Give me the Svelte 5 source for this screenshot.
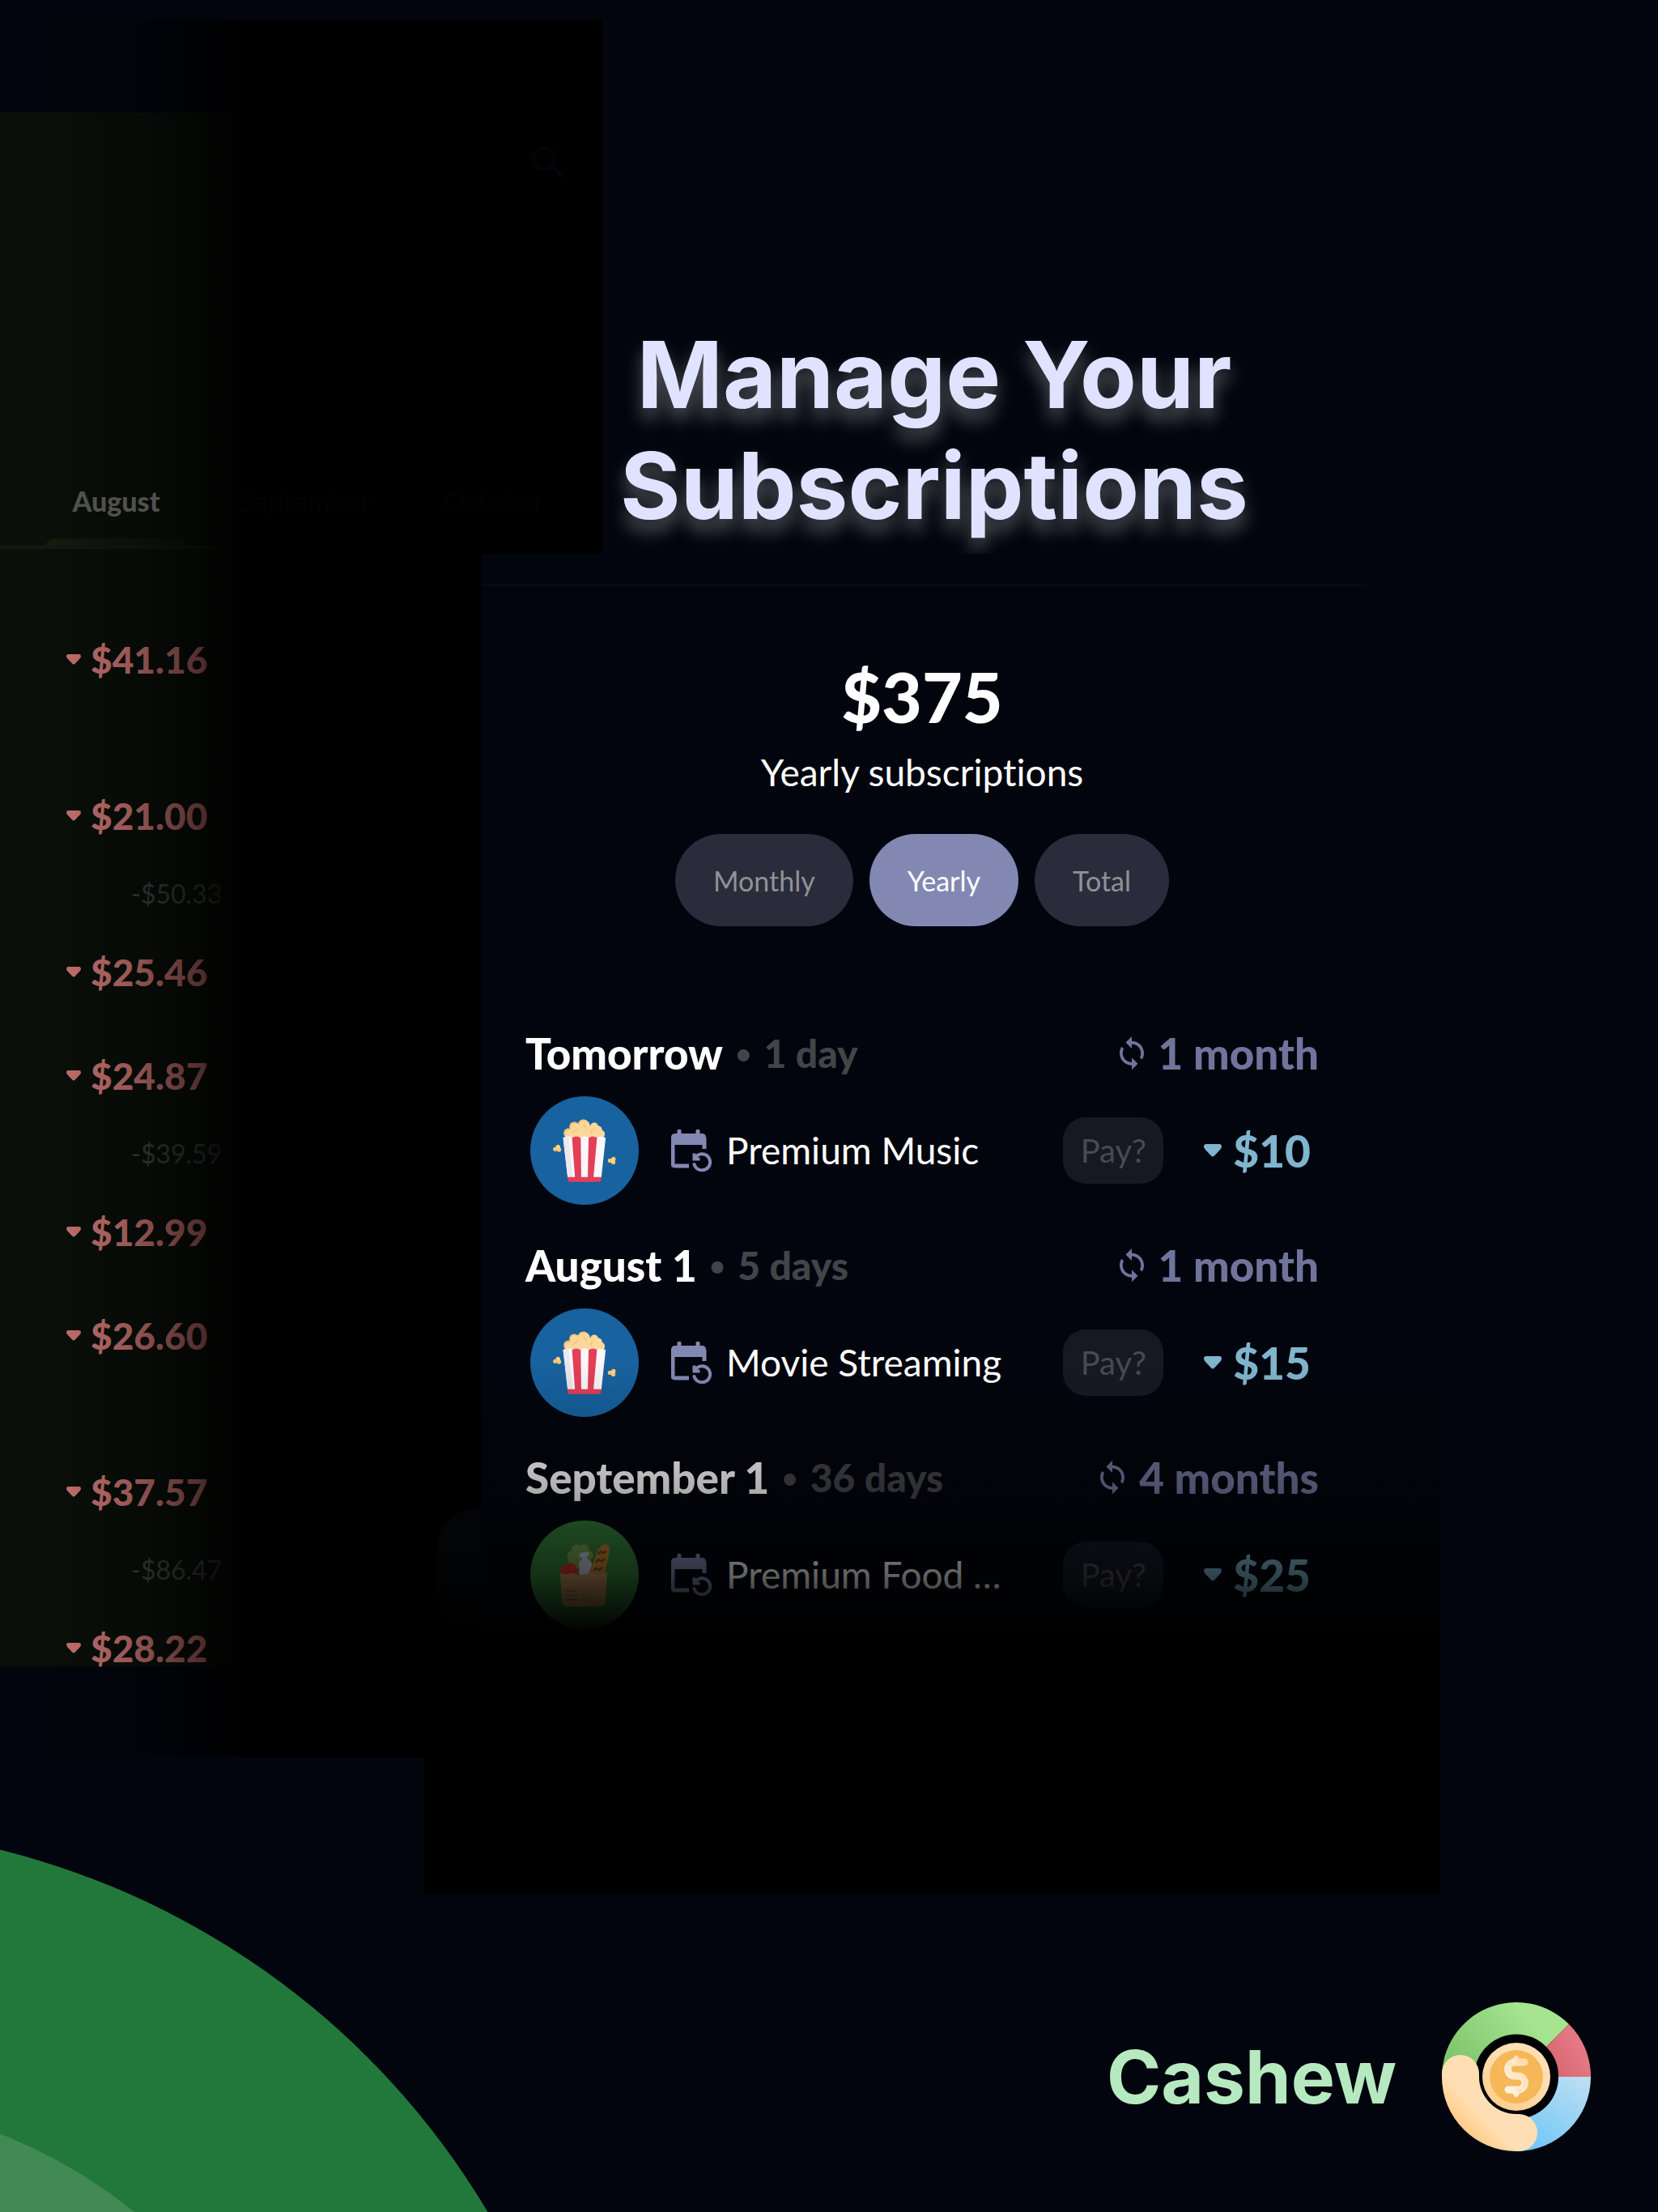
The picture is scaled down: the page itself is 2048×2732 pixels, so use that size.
<script>
  const months = [
    { name: 'August', active: true },
    { name: 'September', active: false },
    { name: 'October', active: false }
  ];

  const history = [
    { amount: '$41.16' },
    { total: '' },
    { amount: '$21.00' },
    { total: '-$50.33' },
    { amount: '$25.46' },
    { amount: '$24.87' },
    { total: '-$39.59' },
    { amount: '$12.99' },
    { amount: '$26.60' },
    { total: '' },
    { amount: '$37.57' },
    { total: '-$86.47' },
    { amount: '$28.22' }
  ];

  const periods = ['Monthly', 'Yearly', 'Total'];
  let period = $state('Yearly');

  const subscriptions = [
    { date: 'Tomorrow', left: '1 day', every: '1 month', name: 'Premium Music', price: '$10', icon: 'popcorn' },
    { date: 'August 1', left: '5 days', every: '1 month', name: 'Movie Streaming', price: '$15', icon: 'popcorn' },
    { date: 'September 1', left: '36 days', every: '4 months', name: 'Premium Food …', price: '$25', icon: 'groceries' }
  ];
</script>

{#snippet caret()}
  <svg class="caret" viewBox="0 0 22 16" aria-hidden="true">
    <path d="M3 0H19Q22 0 22 3Q22 5 20 7L13 14.500Q11 16.500 9 14.500L2 7Q0 5 0 3Q0 0 3 0Z" />
  </svg>
{/snippet}

{#snippet popcorn()}
  <svg class="badge" viewBox="0 0 400 400" aria-hidden="true">
    <circle cx="200" cy="200" r="200" fill="#17629f" />
    <g fill="#fcc675">
      <circle cx="141" cy="136" r="18" /><circle cx="162" cy="112" r="18" /><circle cx="196" cy="107" r="22" />
      <circle cx="102" cy="186" r="8" /><circle cx="106" cy="197" r="8" /><circle cx="92" cy="195" r="8" />
      <circle cx="294" cy="237" r="8" /><circle cx="307" cy="231" r="8" /><circle cx="306" cy="243" r="8" />
    </g>
    <g fill="#fdd79c">
      <circle cx="145" cy="142" r="17" /><circle cx="167" cy="119" r="18" /><circle cx="201" cy="110" r="20" />
      <circle cx="236" cy="112" r="15" /><circle cx="249" cy="124" r="16" /><circle cx="258" cy="140" r="17" />
      <circle cx="222" cy="137" r="25" /><circle cx="183" cy="142" r="24" />
      <circle cx="104" cy="188" r="6" /><circle cx="304" cy="236" r="6" />
    </g>
    <g fill="none" stroke="#fcc675" stroke-width="5" stroke-linecap="round">
      <path d="M196 108q10 2 9 12M158 134q6-10 18-11M224 136q-4-10 10-12" />
    </g>
    <path d="M121 153Q136 144 155 151Q171 144 186 152Q200 144 215 152Q230 144 246 152Q262 144 278 153L262 300H138Z" fill="#f9f7f9" />
    <path d="M121 153Q130 147 142 150L156 300H138Z" fill="#ebe8ee" />
    <path d="M154 153Q170 143 186 153L188 300H165ZM215 153Q230 143 246 153L233 300H212Z" fill="#e43f58" />
    <path d="M138 298H262L260 312Q259 316 256 316H145Q141 316 140 312Z" fill="#e43f58" />
  </svg>
{/snippet}

{#snippet groceries()}
  <svg class="badge" viewBox="0 0 400 400" aria-hidden="true">
    <circle cx="200" cy="200" r="200" fill="#34803a" />
    <g fill="#72a04a">
      <circle cx="158" cy="132" r="22" /><circle cx="172" cy="108" r="20" /><circle cx="198" cy="105" r="18" />
      <circle cx="212" cy="128" r="20" /><circle cx="185" cy="140" r="32" /><circle cx="160" cy="160" r="22" />
    </g>
    <path d="M183 120L212 115Q220 118 215 128L207 134Q210 142 221 148Q228 155 227 170L222 200H180V165Q178 152 190 143L192 135Q182 138 180 130Z" fill="#bcc6da" />
    <path d="M214 198L248 112Q262 84 282 88Q295 94 291 120L274 200Z" fill="#bd812f" />
    <path d="M250 124q8-14 14-7t16-5M242 154q8-14 14-7t18-6M234 186q8-14 14-7t18-6" fill="none" stroke="#744a25" stroke-width="8" />
    <path d="M112 188Q112 162 132 162Q145 150 158 160Q177 170 178 198H112Z" fill="#d3302b" />
    <path d="M110 192Q124 202 140 196Q156 190 172 199Q190 203 206 197Q226 190 244 198Q264 202 284 190L277 300Q276 318 256 318H138Q118 318 117 300Z" fill="#b98b5b" />
    <path d="M128 259H165M128 276H172M128 291H180M192 291H206" stroke="#8f6844" stroke-width="6" />
  </svg>
{/snippet}

<div class="poster">
  <svg class="hill" viewBox="0 2284 604 448" aria-hidden="true">
    <circle cx="-234" cy="3229" r="973" fill="#22783b" />
    <circle cx="-234" cy="3229" r="638" fill="#428a55" />
  </svg>

  <div class="stage">
    <aside class="history">
      <div class="history-card">
        <div class="toolbar">
          <button class="search" aria-label="Search">
            <svg viewBox="0 0 40 40" fill="none" stroke="currentColor" stroke-width="4" aria-hidden="true">
              <circle cx="15" cy="15" r="13" /><path d="M24 24L38 38" stroke-width="5" />
            </svg>
          </button>
        </div>
        <nav class="months">
          {#each months as month}
            <button class:active={month.active}>{month.name}</button>
          {/each}
        </nav>
        <ul class="entries">
          {#each history as row}
            {#if row.amount}
              <li class="spent">{@render caret()}<span>{row.amount}</span></li>
            {:else}
              <li class="total">{row.total}</li>
            {/if}
          {/each}
        </ul>
      </div>
      <div class="side-shade upper"></div>
      <div class="side-shade lower"></div>
    </aside>

    <main>
      <header>
        <h1>Manage Your<br />Subscriptions</h1>
      </header>
      <section class="summary">
        <strong>$375</strong>
        <p>Yearly subscriptions</p>
        <div class="periods">
          {#each periods as item}
            <button class:selected={item === period} onclick={() => (period = item)}>{item}</button>
          {/each}
        </div>
      </section>

      <section class="list">
        {#each subscriptions as sub}
          <article>
            <div class="when">
              <h2>{sub.date}</h2>
              <span class="dot">•</span>
              <span class="left">{sub.left}</span>
              <span class="every">
                <svg viewBox="4 1 16 22" aria-hidden="true">
                  <path d="M12 4V1L8 5l4 4V6c3.310 0 6 2.690 6 6 0 1.010-.25 1.970-.7 2.800l1.460 1.460C19.540 15.030 20 13.570 20 12c0-4.420-3.580-8-8-8zm0 14c-3.310 0-6-2.690-6-6 0-1.010.25-1.970.7-2.800L5.240 7.740C4.460 8.970 4 10.430 4 12c0 4.420 3.580 8 8 8v3l4-4-4-4v3z" />
                </svg>
                {sub.every}
              </span>
            </div>
            <div class="item">
              {#if sub.icon === 'popcorn'}{@render popcorn()}{:else}{@render groceries()}{/if}
              <svg class="repeat" viewBox="0 0 50 52" fill="none" stroke="currentColor" aria-hidden="true">
                <path d="M22 45H5Q2 45 2 42V10M41 10V24" stroke-width="5" />
                <path d="M0 19V10Q0 5 5 5H38Q43 5 43 10V19Z" fill="currentColor" stroke="none" />
                <path d="M10 2V7M33 2V7" stroke-width="5" stroke-linecap="round" />
                <path d="M28.500 43A10 10 0 1 0 30 34.500" stroke-width="4" stroke-linecap="round" />
                <path d="M28.500 29.500V36.500H35.500" stroke-width="4" />
              </svg>
              <span class="name">{sub.name}</span>
              <button class="pay">Pay?</button>
              <span class="price">{@render caret()}{sub.price}</span>
            </div>
          </article>
        {/each}
        <div class="ghost"></div>
        <div class="bottom-shade"></div>
      </section>
    </main>
  </div>

  <footer>
    <span class="brand">Cashew</span>
    <svg class="logo" viewBox="0 0 184 184" fill="none" aria-hidden="true">
      <defs>
        <linearGradient id="leaf" x1="0" y1="0.6" x2="0.7" y2="0.2"><stop offset="0" stop-color="#7fc56c" /><stop offset="1" stop-color="#a5e58f" /></linearGradient>
        <linearGradient id="rose" x1="0" y1="1" x2="0.7" y2="0.5"><stop offset="0" stop-color="#d2606d" /><stop offset="1" stop-color="#e37782" /></linearGradient>
        <linearGradient id="sky" x1="0.2" y1="1" x2="0.9" y2="0"><stop offset="0" stop-color="#6fc5f8" /><stop offset="1" stop-color="#bcdff3" /></linearGradient>
        <linearGradient id="nut" x1="0.22" y1="0.8" x2="0.42" y2="0.6"><stop offset="0" stop-color="#ffcb83" /><stop offset="1" stop-color="#fedfb5" /></linearGradient>
        <linearGradient id="rim" x1="0" y1="1" x2="0.4" y2="0.3"><stop offset="0" stop-color="#ffc986" /><stop offset="1" stop-color="#fedeb2" /></linearGradient>
        <linearGradient id="mint" x1="0" y1="1" x2="1" y2="0"><stop offset="0" stop-color="#fff3e2" /><stop offset="1" stop-color="#fddcab" /></linearGradient>
      </defs>
      <circle cx="92" cy="92" r="55" fill="#000104" />
      <path d="M0 92A92 92 0 0 1 157 27L129 55A52 52 0 0 0 40 92Z" fill="url(#leaf)" />
      <path d="M157 27A92 92 0 0 1 184 92H144A52 52 0 0 0 129 55Z" fill="url(#rose)" />
      <path d="M184 92A92 92 0 0 1 92 184V144A52 52 0 0 0 144 92Z" fill="url(#sky)" />
      <path d="M0 88A23 23 0 0 1 46 88V92A46 46 0 0 0 92 138H95A23 23 0 0 1 95 184H92A92 92 0 0 1 0 92Z" fill="url(#nut)" />
      <circle cx="92" cy="92" r="42" fill="url(#rim)" />
      <circle cx="92" cy="92" r="33" fill="#f6b758" />
      <g stroke="url(#mint)" stroke-linecap="round" stroke-linejoin="round">
        <path d="M102 74H90A8 8 0 0 0 90 91H94A8 8 0 0 1 94 108H82" stroke-width="9" />
        <path d="M89 73L92 69L95 73M89 109L92 114L95 109" stroke-width="6" />
      </g>
    </svg>
  </footer>
</div>

<style>
  :global(body) {
    margin: 0;
    background: #02050d;
  }

  .poster {
    position: relative;
    display: flex;
    flex-direction: column;
    min-height: 100vh;
    overflow: hidden;
    background: #02050d;
    color: #fff;
    font-family: Lato, "Liberation Sans", sans-serif;
    font-variant-ligatures: none;
  }

  button {
    padding: 0;
    border: 0;
    background: none;
    color: inherit;
    font: inherit;
    cursor: pointer;
  }

  svg {
    display: block;
    flex: none;
  }

  .hill {
    position: absolute;
    left: 0;
    bottom: 0;
    width: 604px;
  }

  .stage {
    display: grid;
    grid-template-columns: minmax(0, 595fr) minmax(0, 1092fr) minmax(0, 361fr);
  }

  .history {
    position: relative;
    padding-top: 139px;
  }

  .history-card {
    background: #0a0f09;
  }

  .side-shade {
    position: absolute;
    left: 0;
    z-index: 1;
    background: linear-gradient(
      to right,
      transparent 40px,
      rgb(0 0 0 / 10%) 90px,
      rgb(0 0 0 / 26%) 160px,
      rgb(0 0 0 / 62%) 250px,
      #000 300px
    );
  }

  .upper {
    top: 24px;
    width: 125%;
    height: 660px;
  }

  .lower {
    top: 684px;
    width: 100%;
    height: 1486px;
  }

  .toolbar {
    display: flex;
    justify-content: flex-end;
    box-sizing: border-box;
    width: 125%;
    height: 458px;
    padding: 42px 47px;
  }

  .search {
    position: relative;
    z-index: 2;
    width: 40px;
    height: 40px;
    color: #04040b;
  }

  .months {
    display: flex;
    width: 699px;
    padding-left: 27px;
  }

  .months button {
    position: relative;
    z-index: 2;
    flex: 1;
    padding-bottom: 37px;
    color: #030303;
    font-size: 34px;
    line-height: 44px;
  }

  .months .active {
    color: #50514f;
    font-weight: 900;
  }

  .months .active::after {
    content: "";
    position: absolute;
    right: 30px;
    bottom: 4px;
    left: 30px;
    height: 9px;
    border-radius: 9px 9px 0 0;
    background: linear-gradient(to right, #141b0f, #070a05);
  }

  .entries {
    margin: -4px 0 0;
    padding: 73px 0 0;
    border-top: 4px solid #131a0f;
    list-style: none;
  }

  .spent {
    display: flex;
    align-items: center;
    gap: 12px;
    padding: 42px 0 42px 82px;
    color: #cc7673;
    font-size: 46px;
    font-weight: 900;
    line-height: 44px;
  }

  .spent:last-child {
    padding-bottom: 0;
  }

  .spent .caret {
    width: 18px;
  }

  .total {
    box-sizing: border-box;
    height: 65px;
    padding: 12px 0 0 162px;
    color: #3e423f;
    font-size: 32px;
    line-height: 40px;
  }

  .caret {
    width: 22px;
    fill: currentColor;
  }

  main {
    position: relative;
    z-index: 2;
  }

  header {
    overflow: hidden;
    padding: 394px 0 16px 26px;
  }

  h1 {
    margin: 0;
    color: #e0e3ff;
    font-family: Inter, "Liberation Sans", sans-serif;
    font-size: 114px;
    font-weight: 700;
    line-height: 137px;
    text-align: center;
    text-shadow: 0 14px 22px rgb(255 255 255 / 32%);
  }

  .summary {
    display: flex;
    flex-direction: column;
    align-items: center;
    margin-top: 38px;
    padding: 86px 4px 0 0;
    border-top: 2px solid #090c15;
  }

  .summary strong {
    font-size: 86px;
    font-weight: 900;
    line-height: 100px;
  }

  .summary p {
    margin: 16px 0 48px;
    font-size: 46px;
    line-height: 56px;
  }

  .periods {
    display: flex;
    gap: 20px;
  }

  .periods button {
    height: 114px;
    padding: 0 47px;
    border-radius: 57px;
    background: #2b2c3b;
    color: #919297;
    font-size: 34px;
  }

  .periods .selected {
    background: #8388b3;
    color: #fff;
  }

  .list {
    position: relative;
    display: flex;
    flex-direction: column;
    gap: 45px;
    margin-top: 127px;
    padding: 0 58px 0 54px;
  }

  .when {
    display: flex;
    align-items: center;
    margin-bottom: 23px;
    font-size: 53px;
    font-weight: 900;
    line-height: 60px;
  }

  h2 {
    margin: 0;
    font: inherit;
  }

  .dot,
  .left {
    color: #434449;
    font-size: 48px;
  }

  .dot {
    margin: 0 16px;
    font-size: 32px;
  }

  .every {
    display: flex;
    align-items: center;
    gap: 18px;
    margin-left: auto;
    color: #70749b;
  }

  .every svg {
    width: 30px;
    fill: currentColor;
  }

  .item {
    display: flex;
    align-items: center;
    padding: 0 10px 0 6px;
  }

  .badge {
    width: 134px;
    margin-right: 40px;
  }

  .repeat {
    width: 50px;
    margin-right: 18px;
    color: #8388b3;
  }

  .name {
    flex: 1;
    font-size: 46px;
    line-height: 56px;
    white-space: nowrap;
  }

  .pay {
    width: 124px;
    height: 82px;
    margin-right: 50px;
    border-radius: 28px;
    background: #161824;
    color: #494a50;
    font-size: 40px;
  }

  .price {
    display: flex;
    align-items: center;
    gap: 14px;
    color: #7fb5cd;
    font-size: 55px;
    font-weight: 900;
    line-height: 60px;
  }

  .ghost {
    position: absolute;
    top: 592px;
    left: -55px;
    width: 55px;
    height: 146px;
    border-radius: 50px 0 0 50px;
    background: #05070b;
  }

  .bottom-shade {
    position: absolute;
    top: 409px;
    right: -92px;
    left: -71px;
    height: 659px;
    background: linear-gradient(
      transparent,
      rgb(0 0 0 / 9%) 60px,
      rgb(0 0 0 / 30%) 155px,
      rgb(0 0 0 / 62%) 265px,
      #000 340px
    );
    pointer-events: none;
  }

  footer {
    position: relative;
    display: flex;
    align-items: center;
    justify-content: flex-end;
    gap: 56px;
    margin-top: auto;
    padding: 0 83px 75px 0;
  }

  .brand {
    color: #b7e9c1;
    font-family: Inter, "Liberation Sans", sans-serif;
    font-size: 91px;
    font-weight: 700;
    line-height: 110px;
  }

  .logo {
    width: 184px;
  }
</style>
